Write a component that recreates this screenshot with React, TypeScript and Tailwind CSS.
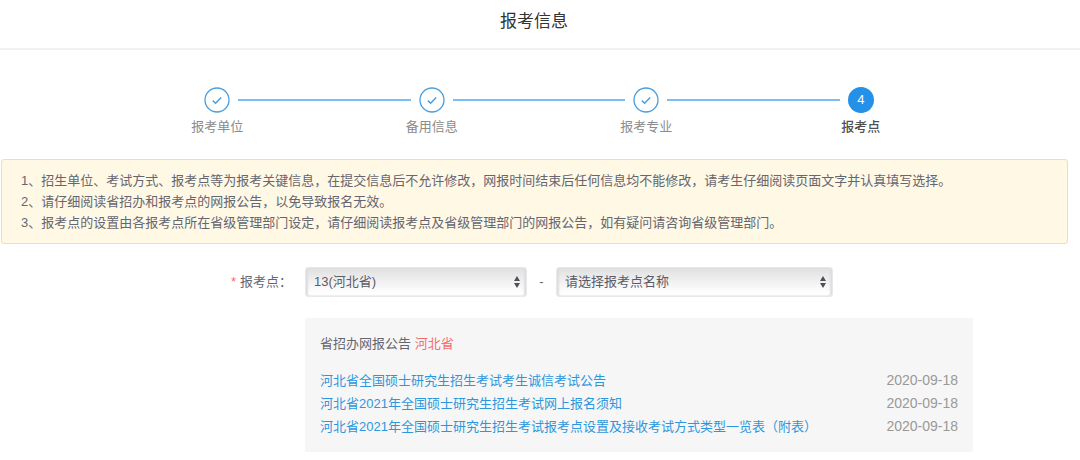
import { useState } from 'react';
import clsx from 'clsx';

const steps = ['报考单位', '备用信息', '报考专业', '报考点'];
const currentStep = 3;

const notices = [
  '1、招生单位、考试方式、报考点等为报考关键信息，在提交信息后不允许修改，网报时间结束后任何信息均不能修改，请考生仔细阅读页面文字并认真填写选择。',
  '2、请仔细阅读省招办和报考点的网报公告，以免导致报名无效。',
  '3、报考点的设置由各报考点所在省级管理部门设定，请仔细阅读报考点及省级管理部门的网报公告，如有疑问请咨询省级管理部门。',
];

const announcements = [
  { title: '河北省全国硕士研究生招生考试考生诚信考试公告', date: '2020-09-18' },
  { title: '河北省2021年全国硕士研究生招生考试网上报名须知', date: '2020-09-18' },
  { title: '河北省2021年全国硕士研究生招生考试报考点设置及接收考试方式类型一览表（附表）', date: '2020-09-18' },
];

function StepBar() {
  return (
    <ol className="mt-[37px] ml-[110px] mr-[112px] grid grid-cols-4">
      {steps.map((step, index) => {
        const done = index < currentStep;
        return (
          <li key={step}>
            <div className="flex items-center gap-2">
              <span className={clsx('h-[2px] flex-1', index > 0 && 'bg-[#7cbdf5]')} />
              {done ? (
                <svg className="size-[26px]" viewBox="0 0 26 26" fill="none" stroke="#4a9fdc">
                  <circle cx="13" cy="13" r="12" strokeWidth="1.3" />
                  <path d="M8.8 13.6 L11.6 16.2 L17.2 10.4" strokeWidth="1.5" />
                </svg>
              ) : (
                <span className="flex size-[26px] items-center justify-center rounded-full bg-[#2490e8] text-[13px] text-white">
                  {index + 1}
                </span>
              )}
              <span className={clsx('h-[2px] flex-1', done && 'bg-[#7cbdf5]')} />
            </div>
            <p className={clsx('mt-1 text-center leading-5', done ? 'text-[#8c8c8c]' : 'font-medium text-[#505050]')}>
              {step}
            </p>
          </li>
        );
      })}
    </ol>
  );
}

interface SelectFieldProps {
  label: string;
  id: string;
  className: string;
  value: string;
  options: string[];
  onChange: (value: string) => void;
}

function SelectField({ label, id, className, value, options, onChange }: SelectFieldProps) {
  return (
    <div className={clsx('relative', className)}>
      <select
        id={id}
        aria-label={label}
        value={value}
        onChange={(e) => onChange(e.target.value)}
        className="block h-[30px] w-full appearance-none rounded-[3px] border border-[#e8e8e8] bg-linear-to-b from-[#e0e0e0] to-white to-90% px-2 text-[#5c5c66] shadow-[inset_2px_0_2px_#dedede,inset_-2px_0_2px_#dedede]"
      >
        {options.map((option) => (
          <option key={option}>{option}</option>
        ))}
      </select>
      <svg className="pointer-events-none absolute top-2 right-[7px] h-[14px] w-[6px]" viewBox="0 0 6 14" fill="#505058">
        <path d="M3 1 L6 6 H0 Z M3 13 L6 8 H0 Z" />
      </svg>
    </div>
  );
}

export default function App() {
  const [province, setProvince] = useState('13(河北省)');
  const [site, setSite] = useState('请选择报考点名称');

  return (
    <div className="bg-white font-['Liberation_Sans','Noto_Sans_CJK_SC',sans-serif] text-[13px] text-[#666670]">
      <header className="flex h-[50px] items-center justify-center border-b-2 border-[#f1f1f1] pr-3 pb-1">
        <h1 className="text-[17px] text-[#333]">报考信息</h1>
      </header>

      <StepBar />

      <div className="mt-[22px] mr-3 ml-px rounded-[3px] border border-[#f5e29a] bg-[#fef8e5] px-[19px] py-[10px] leading-[21px]">
        {notices.map((notice) => (
          <p key={notice}>{notice}</p>
        ))}
      </div>

      <form className="mt-[23px] flex items-center">
        <label htmlFor="province" className="w-[305px] pl-[231px] whitespace-nowrap">
          <span className="mr-1 text-[#f56c6c]">*</span>
          报考点：
        </label>
        <SelectField
          id="province"
          label="报考点"
          className="w-[222px]"
          value={province}
          options={['13(河北省)']}
          onChange={setProvince}
        />
        <span className="w-[29px] text-center">-</span>
        <SelectField
          id="site"
          label="报考点名称"
          className="w-[277px]"
          value={site}
          options={['请选择报考点名称']}
          onChange={setSite}
        />
      </form>

      <section className="mt-[21px] mr-[107px] ml-[305px] bg-[#f6f6f6] px-[15px] pt-[14px] pb-[14px] leading-[23px]">
        <h2>
          省招办网报公告 <span className="text-[#f56c6c]">河北省</span>
        </h2>
        <ul className="mt-[14px]">
          {announcements.map(({ title, date }) => (
            <li key={title} className="flex justify-between">
              <a href="#" className="text-[#2e96dc]">{title}</a>
              <time className="text-[14px] text-[#999]">{date}</time>
            </li>
          ))}
        </ul>
      </section>
    </div>
  );
}
